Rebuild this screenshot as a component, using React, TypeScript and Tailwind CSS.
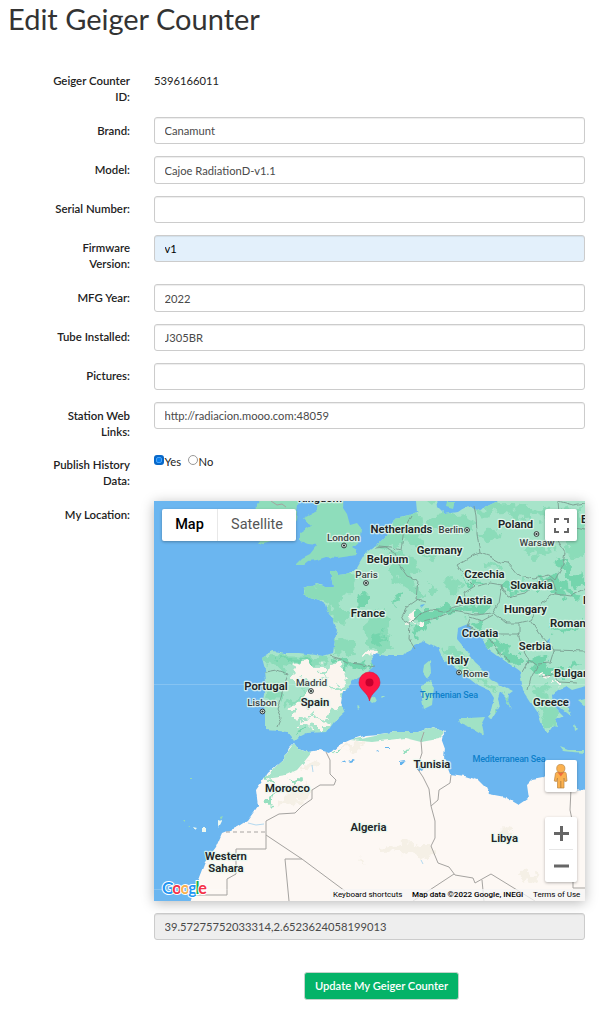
import React from 'react';

type FieldRow = { label: string; value: string; height: string; tone?: string; box?: string; lift?: string };

const fields: FieldRow[] = [
  { label: 'Brand:', value: 'Canamunt', height: 'h-[39px]' },
  { label: 'Model:', value: 'Cajoe RadiationD-v1.1', height: 'h-[40px]', box: 'h-[28px]' },
  { label: 'Serial Number:', value: '', height: 'h-[39px]', lift: 'pt-[5px]' },
  { label: 'Firmware Version:', value: 'v1', height: 'h-[49px]', tone: 'bg-[#e3f0fb] text-black', lift: 'pt-[5px]' },
  { label: 'MFG Year:', value: '2022', height: 'h-[40px]', box: 'h-[28px]' },
  { label: 'Tube Installed:', value: 'J305BR', height: 'h-[39px]', lift: 'pt-[5px]' },
  { label: 'Pictures:', value: '', height: 'h-[39px]', lift: 'pt-[5px]' },
  { label: 'Station Web Links:', value: 'http://radiacion.mooo.com:48059', height: 'h-[49px]' },
];

function Row({ label, height, lift, children }: { label: string; height: string; lift?: string; children: React.ReactNode }) {
  return (
    <div className={`flex items-start ${height}`}>
      <div className={`w-[130px] shrink-0 pl-[45px] text-right text-[11.4px] leading-[16px] font-semibold text-[#222] ${lift ?? 'pt-[6px]'}`}>{label}</div>
      <div className="ml-6 w-[431px] shrink-0">{children}</div>
    </div>
  );
}

const mainland =
  'M415 490 L417 512 L409 515 L395 518 L390 527 L386 536 L378 544 L366 552 L361 561 L357 568 L347 574 L338 575 L336 571 L330 571 L333 586 L325 586 L317 583 L303 588 L303 593 L310 597 L319 600 L325 604 L327 611 L332 618 L334 625 L337 630 L335 640 L333 653 L323 656 L300 653 L285 653 L273 651 L262 658 L265 669 L266 683 L263 700 L265 712 L265 730 L279 731 L287 732 L294 741 L299 737 L307 733 L327 732 L334 722 L345 712 L341 703 L342 695 L353 681 L365 674 L373 667 L372 657 L375 653 L385 656 L404 656 L415 645 L425 641 L438 648 L443 659 L462 673 L476 684 L489 690 L494 698 L491 710 L488 717 L492 719 L500 706 L498 699 L500 692 L505 697 L511 710 L508 700 L509 694 L513 691 L503 686 L491 680 L484 671 L474 662 L462 645 L457 639 L458 628 L468 624 L472 631 L482 639 L490 650 L505 661 L520 672 L523 690 L532 704 L538 713 L542 725 L548 733 L553 726 L558 727 L555 720 L564 716 L553 705 L552 695 L558 690 L566 686 L572 690 L579 688 L595 684 L595 490 L498 490 L498 501 L477 511 L468 505 L458 512 L445 514 L438 507 L436 490 Z';
const britain =
  'M318 490 L317 511 L304 518 L308 523 L311 526 L300 533 L300 541 L308 544 L317 545 L310 554 L302 558 L295 565 L303 565 L308 561 L317 560 L326 557 L337 558 L357 555 L357 550 L352 547 L360 540 L361 528 L357 523 L350 525 L347 514 L343 508 L344 490 Z';
const ireland = 'M256 505 L269 490 L300 490 L296 520 L286 535 L271 541 L257 545 L263 533 L254 525 Z';
const africa =
  'M294 743 L298 749 L308 752 L320 750 L330 753 L339 745 L350 740 L366 735 L380 734 L395 732 L418 732 L433 727 L446 732 L441 738 L445 749 L444 758 L450 774 L465 776 L478 780 L486 788 L489 794 L505 797 L519 805 L528 799 L526 785 L532 779 L543 777 L556 782 L570 789 L595 790 L595 915 L186 915 L196 885 L205 862 L216 847 L222 833 L237 827 L248 820 L258 806 L256 790 L268 773 L284 759 L289 748 Z';

const borders = [
  'M330 656 L341 659 L348 663 L359 664 L370 667 L375 666',
  'M265 672 L276 670 L288 674 L284 684 L281 698 L277 709 L281 718 L277 728',
  'M375 548 L386 547 L395 553 L400 566 L407 576 L418 580 L416 599 L426 602',
  'M378 546 L391 547 L401 550 L404 529 L411 516',
  'M417 600 L407 607 L401 618 L410 624 L414 620 L421 613 L432 610 L443 612 L455 607 L467 604 L464 593 L475 586 L462 573 L457 565 L474 555 L480 553 L477 533 L476 516 L474 506',
  'M410 624 L409 639 L415 649 M423 621 L439 617 L453 611 L475 615 L493 613 L499 603 L502 585 L490 583 L478 586',
  'M480 553 L491 557 L500 562 L508 563 L519 576 L534 579 L549 575 L555 580 L563 564 L565 552 L557 539 L560 527 L558 501',
  'M501 585 L508 597 L525 593 L537 583 L551 579 M494 613 L506 623 L519 623 L531 620 L542 602 L556 593 L551 579',
  'M493 615 L482 621 L470 617 L467 627 L482 632 L488 630 L500 634 L519 634 L519 623',
  'M488 637 L493 644 L499 653 L511 662 M518 633 L523 649 L529 660 L522 672 M529 660 L537 666 L531 678 L528 690 M538 664 L550 663 L554 650 L585 651 M531 621 L541 635 L554 650 M539 677 L553 675 L559 682 L578 683',
  'M556 594 L570 596 L585 589 M563 535 L576 528 L585 530 M558 501 L573 505 L585 503',
  'M326 752 L330 760 L330 774 L336 780 L334 785 L320 785 L312 790 L312 799 L302 806 L295 813 L279 814 L266 821 L266 849 L236 849 L236 874 L227 879 L227 895 L195 895',
  'M424 732 L421 741 L422 753 L417 768 L423 777 L429 789 L431 806 L435 821 L435 838 L431 846 L438 863 L449 867 L455 875 L473 878 L475 883 L491 874 L535 901',
  'M451 775 L450 783 L439 790 L438 800 L431 806 M266 835 L302 859 L345 891 M413 901 L454 874 M302 859 L285 859 L289 901 M482 880 L484 901 M571 789 L570 810 L573 824 L573 888 L585 888',
];

type Place = [string, number, number, number];
const countries: Place[] = [
  ['Kingdom', 320, 502, 11], ['Netherlands', 401.5, 533, 11.3], ['Belgium', 387.5, 563, 11.3], ['Germany', 439.5, 554, 11.3],
  ['Poland', 515.5, 528, 11.3], ['Czechia', 484.5, 578, 11.3], ['Slovakia', 531.5, 589, 11.3], ['Austria', 474, 604, 11.3],
  ['Hungary', 525.5, 612.5, 11.3], ['Croatia', 480, 637, 11.3], ['Serbia', 535, 650, 11.3], ['Italy', 458, 663.5, 11.3],
  ['Greece', 551, 706, 11.3], ['France', 368, 617, 11.3], ['Portugal', 266, 690, 11.3], ['Spain', 315, 706, 11.3],
  ['Tunisia', 432, 767.5, 11.3], ['Morocco', 287.5, 792, 11.3], ['Algeria', 368.5, 831, 11.3], ['Libya', 504.5, 842, 11.3],
  ['Western', 226, 860, 11.3], ['Sahara', 226, 871.5, 11.3],
];
const cities: Place[] = [
  ['London', 343.5, 540.5, 9.9], ['Paris', 366.5, 578, 9.9], ['Berlin', 451, 533, 9.6], ['Warsaw', 537, 546, 9.9],
  ['Rome', 475.5, 676.5, 9.7], ['Madrid', 311.5, 686, 9.9], ['Lisbon', 262, 706, 9.9],
];
const dots = [[344, 545.5], [366, 583], [467, 530], [536.5, 534], [459, 672.5], [311, 691], [262.5, 711.5]];

function MapCanvas() {
  return (
    <svg viewBox="154 501 431 400" className="block h-[400px] w-[431px]" fontFamily="Roboto, sans-serif">
      <defs>
        <filter id="coast" x="-5%" y="-5%" width="110%" height="110%" colorInterpolationFilters="sRGB">
          <feTurbulence type="fractalNoise" baseFrequency="0.12" numOctaves="2" seed="6" />
          <feDisplacementMap in="SourceGraphic" scale="4" xChannelSelector="R" yChannelSelector="G" />
        </filter>
        <filter id="terrain" x="-5%" y="-5%" width="110%" height="110%" colorInterpolationFilters="sRGB">
          <feTurbulence type="fractalNoise" baseFrequency="0.1" numOctaves="2" seed="11" />
          <feDisplacementMap in="SourceGraphic" scale="20" xChannelSelector="R" yChannelSelector="G" />
          <feGaussianBlur stdDeviation="0.35" />
        </filter>
        <clipPath id="europe"><path d={mainland} /></clipPath>
        <clipPath id="afr"><path d={africa} /></clipPath>
      </defs>
      <rect x="154" y="501" width="431" height="400" fill="#6bb6f0" />
      <g filter="url(#coast)">
        <path d={mainland} fill="#a7e4ca" />
        <path d={britain} fill="#8eddbb" />
        <path d={ireland} fill="#8eddbb" />
        <path d={africa} fill="#fdf8f4" />
        <g fill="#a0e2c5">
          <path d="M424 665 L430 660 L431 672 L427 679 L423 673 Z" />
          <path d="M422 685 L430 681 L434 687 L432 705 L424 709 L422 700 Z" />
          <path d="M459 718 L468 718 L486 717 L482 725 L484 735 L472 728 L460 723 Z" />
          <path d="M560 747 L568 750 L584 750 L584 753 L563 751 Z" />
          <path d="M368 699 L374 695 L377 701 L372 703 Z" />
          <path d="M357 706 l3 1 l-2 2z M380 695 l4 0 l-2 2z" />
          <path d="M555 700 L569 708 L572 717 L561 708 Z M574 724 l4 5 l-3 2z M578 701 l7 -2 v8z" />
        </g>
        <path d="M447 501 l8 0 l-2 8 l-7 -2z M428 501 l8 0 l-3 4z" fill="#8eddbb" />
        <g clipPath="url(#europe)">
          <g filter="url(#terrain)">
            <g fill="#8bdcb9">
              <path d="M324 570 L356 574 L352 592 L340 600 L347 617 L338 624 L324 602 L302 596 L303 583 L330 584 Z" />
              <path d="M391 513 L418 510 L422 525 L436 517 L470 514 L472 530 L445 534 L432 530 L414 546 L402 542 L388 550 L375 545 Z" />
              <path d="M395 552 L412 553 L420 570 L411 582 L423 594 L417 603 L404 584 L386 572 Z" />
              <path d="M369 616 L382 610 L393 621 L385 633 L392 648 L377 652 L365 644 Z M334 634 L350 642 L354 653 L335 654 Z" />
              <path d="M480 505 L515 504 L540 512 L555 508 L550 518 L522 520 L500 512 L484 520 Z" />
              <path d="M449 576 L463 583 L457 594 L443 588 Z M484 562 L503 566 L500 573 Z M480 532 l15 -6 l8 8 l-14 10z" />
              <path d="M561 510 L582 507 L584 555 L571 560 L564 535 Z M520 550 l20 -8 l14 7 l-18 8z" />
              <path d="M438 645 L453 648 L469 667 L491 684 L500 688 L487 687 L463 670 Z M498 697 l10 -3 l3 10 l-13 15z" />
              <path d="M262 654 L325 655 L323 663 L300 662 L286 669 L267 667 Z M268 684 l12 -2 l0 16 l-8 8 l-4 -8z M286 700 l18 -7 l-3 8 l-12 4z" />
              <path d="M533 684 L548 683 L550 704 L560 713 L556 728 L548 726 L540 704 Z M422 555 l12 -6 l8 5 l-10 6z M430 585 l8 6 l-8 8z" />
            </g>
            <g fill="#74d5ad">
              <path d="M415 621 L421 609 L437 609 L458 605 L488 603 L492 608 L477 614 L451 613 L425 622 L417 640 L410 636 Z" />
              <path d="M503 585 L512 581 L535 582 L552 574 L568 588 L583 597 L578 602 L557 590 L533 590 L507 591 Z" />
              <path d="M556 556 L568 566 L584 578 L584 588 L570 584 Z" />
              <path d="M468 623 L480 621 L485 631 L500 645 L519 655 L519 667 L505 658 L488 642 L480 632 Z" />
              <path d="M545 626 L558 629 L577 626 L582 618 L582 628 L565 634 Z M527 661 L547 656 L553 669 L577 665 L568 674 L548 675 L530 669 Z" />
              <path d="M327 657 L370 665 L369 670 L347 666 Z M273 657 l45 1 l-4 4 l-28 -1z M372 636 l10 -3 l3 12 l-8 3z M460 571 l5 9 l18 3 l-17 4z" />
              <path d="M358 596 l8 1 l0 8 l-9 0z M393 597 l9 -3 l-5 12z M296 732 l9 -4 l-10 11z" />
            </g>
            <g fill="#fbf5ef">
              <path d="M296 666 L304 662 L317 661 L325 672 L317 675 L316 684 L300 683 L291 677 Z" />
              <path d="M331 662 L344 666 L346 683 L336 687 L325 678 Z M314 677 L328 681 L332 691 L344 691 L342 705 L326 714 L329 721 L315 716 L314 704 L303 697 Z" />
              <path d="M288 709 L302 704 L320 708 L311 718 L295 716 Z M294 725 L300 720 L319 719 L329 729 L313 729 L306 725 Z M365 653 l11 -2 l-2 6 l-10 2z" />
              <path d="M410 617 l11 -3 l-4 7 l-8 1z M541 675 l5 -2 l1 4z M552 683 l6 0 l0 7z" />
            </g>
          </g>
        </g>
        <g clipPath="url(#afr)">
          <path d="M294 743 L302 750 L312 752 L304 762 L297 770 L286 775 L273 777 L266 778 L283 758 Z M350 740 L395 731 L433 727 L446 731 L438 739 L421 742 L405 738 L372 742 Z" fill="#a7e4ca" />
          <g filter="url(#terrain)">
            <path d="M266 797 l13 -6 l-7 11 l-10 3z M288 779 l15 -2 l-2 6z M329 752 l14 -3 l-7 7z M401 750 l9 -2 l-3 6z M262 779 l8 -2 l-2 7z" fill="#96dfbf" />
            <path d="M288 792 L305 784 L313 790 L296 803 L274 806 Z M341 751 L356 743 L371 741 L361 748 Z M381 847 L397 843 L418 842 L434 849 L423 858 L403 852 L382 853 Z M497 832 l14 -4 l5 7 l-18 3z M520 875 l12 -3 l4 8 l-14 3z M356 858 l10 5 l-4 1z M300 765 l14 -6 l3 6 l-16 7z" fill="#f5f0e6" />
          </g>
        </g>
        <g fill="#63b3ed">
          <path d="M341 763 l5 -2 l-1 2z M348 761 l5 -2 l2 1 l-4 2z M376 750 l2 -1 l1 2z M385 748 h5 v1 h-5z M400 761 l6 -1 l-2 4 l-3 1z M417 766 l7 2 l-2 3 l-4 -2z" />
          <path d="M546 642 l4 -4 l-1 5z M420 605 l5 -1 l-3 3z" />
        </g>
        <g fill="#edf8ef"><path d="M192 826 l4 1 l-2 2z M202 827 h4 v4 h-4z M218 820 l3 1 l-3 6z" /></g>
        <path d="M220 817 l3 -1 l-2 4z M190 778 h2 v1 h-2z M183 820 h2 v2z M188 826 l2 0 v1z" fill="#93dcb5" />
      </g>
      <g fill="none" stroke="#7b9c90" strokeWidth=".9" filter="url(#coast)">
        {borders.slice(0, 11).map((d) => <path key={d} d={d} />)}
      </g>
      <g fill="none" stroke="#a5a3a0" strokeWidth="1">
        {borders.slice(11).map((d) => <path key={d} d={d} />)}
        <path d="M226 832 H266" stroke="#c4c0bd" strokeDasharray="4 3" strokeWidth="1.3" />
        <path d="M271 501 l6 4 l5 -1 l4 3" />
      </g>
      <path d="M248 823 l8 2 l8 -1 M421 860 l2 4 M312 765 l1 7" stroke="#9fd0ee" fill="none" strokeWidth=".8" />
      <path d="M154 684.5 H585 M154 889.5 H230" stroke="#fff" strokeOpacity=".18" />
      <g textAnchor="middle" paintOrder="stroke" stroke="#e9f8f0" strokeOpacity=".8" strokeWidth="2.5" strokeLinejoin="round">
        {countries.map(([name, x, y, size]) => <text key={name} x={x} y={y} fontSize={size} fontWeight="600" fill="#202426">{name}</text>)}
        {cities.map(([name, x, y, size]) => <text key={name} x={x} y={y} fontSize={size} fontWeight="500" fill="#3c4244">{name}</text>)}
        <text x="550" y="627" fontSize="11.3" fontWeight="600" fill="#202426" textAnchor="start">Romania</text>
        <text x="554" y="676.5" fontSize="11.3" fontWeight="600" fill="#202426" textAnchor="start">Bulgaria</text>
        <text x="581" y="523" fontSize="11.3" fontWeight="600" fill="#202426" textAnchor="start">Belarus</text>
        <text x="583" y="604" fontSize="11.3" fontWeight="600" fill="#202426" textAnchor="start">Moldova</text>
      </g>
      <g fontSize="9" fontWeight="500" fill="#0d80ca">
        <text x="420" y="698" textLength="58">Tyrrhenian Sea</text>
        <text x="472.5" y="762" textLength="73">Mediterranean Sea</text>
      </g>
      {dots.map(([x, y]) => (
        <g key={x}>
          <circle cx={x} cy={y} r="2.4" fill="#dff2ea" stroke="#353c3d" strokeWidth="1" />
          <circle cx={x} cy={y} r="1.1" fill="#252a2b" />
        </g>
      ))}
      <path d="M369.5 701 C368 692 359 690 359 682.5 A10.5 10.5 0 0 1 380 682.5 C380 690 371 692 369.5 701 Z" fill="#ff1744" stroke="#e00b35" strokeWidth=".6" />
      <circle cx="369.5" cy="682.5" r="4" fill="#c5002d" />
    </svg>
  );
}

const control = 'absolute rounded-[2px] bg-white shadow-[0_1px_3px_rgba(0,0,0,0.3)]';

function LocationMap() {
  return (
    <div className="relative h-[400px] w-[431px] shadow-[0_2px_12px_rgba(0,0,0,0.28)]">
      <div className="h-full overflow-hidden"><MapCanvas /></div>
      <div className={`${control} left-2 top-2 flex h-8 w-[134px] items-center font-[Roboto] text-[14.5px]`}>
        <span className="flex h-full w-[56px] items-center justify-center border-r border-[#e8e8e8] font-medium text-black">Map</span>
        <span className="flex-1 text-center text-[#565656]">Satellite</span>
      </div>
      <div className={`${control} left-[391px] top-2 size-8`}>
        <svg viewBox="0 0 32 32" className="size-8" fill="none" stroke="#666" strokeWidth="2">
          <path d="M10 14V10H14M19 10H23V14M23 19V23H19M14 23H10V19" />
        </svg>
      </div>
      <div className={`${control} left-[391px] top-[259px] size-8`}>
        <svg viewBox="0 0 32 32" className="size-8">
          <path d="M10.5 13.2Q11 12 13 12H19Q21 12 21.2 13.5L22 21L19.8 21.5L19 18V28H12.5V18L11.5 21.5L9.3 21Z" fill="#fbb14f" stroke="#b98543" strokeWidth=".7" />
          <path d="M12.5 12.3H19L15.8 16.5Z" fill="#f06b3e" />
          <circle cx="15.8" cy="8.5" r="4.1" fill="#fbb14f" stroke="#b98543" strokeWidth=".7" />
          <path d="M15.8 21V28" stroke="#a8793e" strokeWidth=".8" />
        </svg>
      </div>
      <div className={`${control} left-[391px] top-[316px] h-[65px] w-8`}>
        <svg viewBox="0 0 32 65" className="h-[65px] w-8" fill="none" stroke="#666" strokeWidth="3">
          <path d="M9 16.5H24M16.5 9V24M9 49H24" />
          <path d="M4 32.5H28" stroke="#e6e6e6" strokeWidth="1" />
        </svg>
      </div>
      <div className="absolute bottom-[1px] left-2">
        <svg viewBox="0 0 48 20" className="block h-5 w-12 overflow-visible">
          <text x="0" y="13.5" textLength="45" fontFamily="Lato, sans-serif" fontSize="16.2" fontWeight="700" paintOrder="stroke" stroke="#fff" strokeWidth="2">
            <tspan fill="#2196f3">G</tspan><tspan fill="#f5334a">o</tspan><tspan fill="#fbb14f">o</tspan><tspan fill="#2196f3">g</tspan><tspan fill="#22b04c">l</tspan><tspan fill="#f5334a">e</tspan>
          </text>
        </svg>
      </div>
      <div className="absolute bottom-0 right-0 flex h-[12px] items-center bg-[#f5f5f5]/75 pr-1 pl-[3px] font-[Roboto] text-[8px] whitespace-nowrap text-black">
        <span className="w-[79px]">Keyboard shortcuts</span>
        <span className="w-[121px] font-medium">Map data ©2022 Google, INEGI</span>
        <span className="w-[48px]">Terms of Use</span>
      </div>
    </div>
  );
}

export default function App() {
  return (
    <main className="h-[1010px] w-[599px] overflow-hidden bg-white font-[Lato,sans-serif] text-[11.2px] text-[#333]">
      <h1 className="h-[67px] pt-[3px] pl-2 text-[29px] leading-[32px] font-normal">Edit Geiger Counter</h1>
      <Row label="Geiger Counter ID:" height="h-[50px]">
        <p className="pt-[6px] text-[11.2px] leading-[16px] text-[#222]">5396166011</p>
      </Row>
      {fields.map((f) => (
        <Row key={f.label} label={f.label} height={f.height} lift={f.lift}>
          <input
            readOnly
            value={f.value}
            className={`block w-full rounded-[3px] border border-[#ccc] px-[9.5px] text-[11.2px] shadow-[inset_0_1px_1px_rgba(0,0,0,0.075)] outline-none ${f.box ?? 'h-[27px]'} ${f.tone ?? 'bg-white text-[#4a4a4a]'}`}
          />
        </Row>
      ))}
      <Row label="Publish History Data:" height="h-[50px]">
        <div className="flex pt-[3px] text-[11.2px] leading-[16px] text-[#222]">
          <span className="mt-[1px] flex size-[10px] items-center justify-center rounded-[3px] bg-[#0868c8]">
            <span className="size-[6px] rounded-[2px] border border-[#4da6fa] bg-[#087ff0]" />
          </span>
          <span className="pl-[0.5px]">Yes</span>
          <span className="mt-[1px] ml-[7px] size-[10px] rounded-full border border-[#999] bg-white" />
          <span className="pl-[0.5px]">No</span>
        </div>
      </Row>
      <Row label="My Location:" height="h-[412px]"><LocationMap /></Row>
      <div className="ml-[154px] w-[431px]">
        <input
          readOnly
          value="39.57275752033314,2.6523624058199013"
          className="block h-[27px] w-full rounded-[3px] border border-[#ccc] bg-[#eee] px-[9.5px] text-[11.2px] text-[#4a4a4a] shadow-[inset_0_1px_1px_rgba(0,0,0,0.075)] outline-none"
        />
      </div>
      <button className="mt-8 ml-[304px] block h-[28px] w-[155px] rounded-[3px] border border-[#c5d3cb] bg-[#04b368] text-[11.2px] font-semibold text-white">
        Update My Geiger Counter
      </button>
    </main>
  );
}
